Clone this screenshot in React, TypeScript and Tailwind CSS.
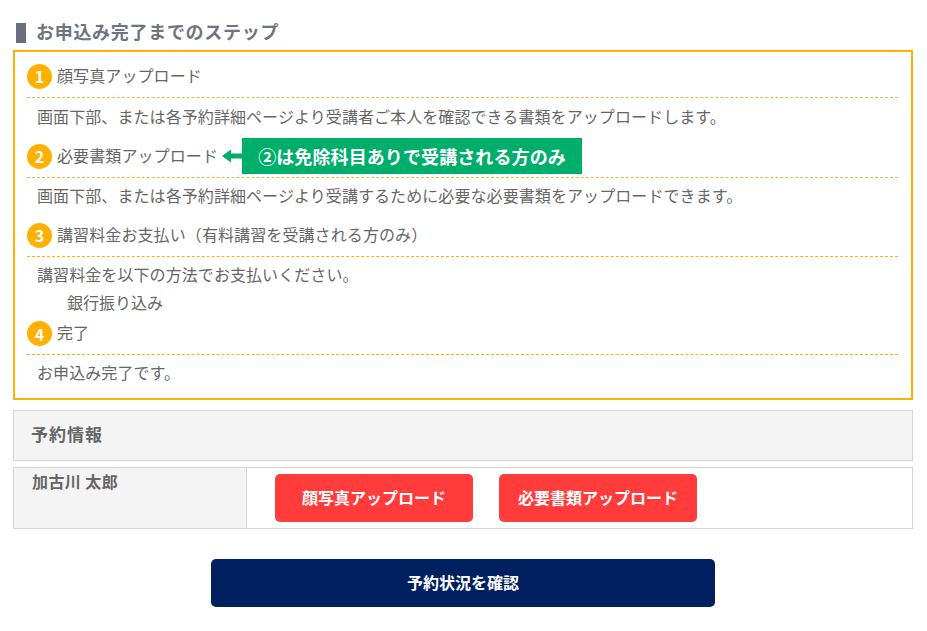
const font = { fontFamily: '"Noto Sans CJK JP", sans-serif' };

function Step({ n, title, children, dashed = "border-[#f5b335]", height = "h-[43px]", shift = "pb-[2px]" }: { n: number; title: string; children?: React.ReactNode; dashed?: string; height?: string; shift?: string }) {
  return (
    <div className={`flex ${height} items-center border-b border-dashed ${dashed}`}>
      <span className="flex h-[25px] w-[25px] shrink-0 items-center justify-center rounded-full bg-[#ffb000] text-[16px] font-bold leading-none text-white">{n}</span>
      <span className={`ml-[5px] ${shift} text-[16px] leading-none tracking-[0.1px]`}>{title}</span>
      {children}
    </div>
  );
}

function Desc({ children, height = "h-[36px]" }: { children: React.ReactNode; height?: string }) {
  return <p className={`flex ${height} items-center pb-[2px] pl-[10px] text-[16px] leading-none tracking-[0.08px]`}>{children}</p>;
}

export default function App() {
  return (
    <div className="min-h-[631px] w-[927px] bg-white pl-[13px] pr-[14px] text-[#666666]" style={font}>
      <h2 className="flex h-[50px] items-end pb-[7px] pl-[3px] text-[18px] font-bold leading-[20px] text-[#6d7680]">
        <span className="mr-[10px] h-[20px] w-[10px] bg-[#666f7b]" />
        <span className="mb-[2px] tracking-[0.7px]">お申込み完了までのステップ</span>
      </h2>
      <div className="h-[350px] border-2 border-[#ffb000] pl-[12px] pr-[13px] pt-[3px]">
        <Step n={1} title="顔写真アップロード" />
        <Desc height="h-[37px]">画面下部、または各予約詳細ページより受講者ご本人を確認できる書類をアップロードします。</Desc>
        <Step n={2} title="必要書類アップロード">
          <svg className="ml-[4px] shrink-0" width="20" height="14" viewBox="0 0 20 14">
            <path d="M0 7 L9 0.5 V4.5 H20 V9.5 H9 V13.5 Z" fill="#00ae6b" />
          </svg>
          <span className="flex h-[36px] w-[340px] items-center justify-center bg-[#00ae6b] pb-[1px] text-[18px] font-bold leading-none tracking-[0.1px] text-white">②は免除科目ありで受講される方のみ</span>
        </Step>
        <Desc>画面下部、または各予約詳細ページより受講するために必要な必要書類をアップロードできます。</Desc>
        <Step n={3} title="講習料金お支払い（有料講習を受講される方のみ）" dashed="border-[#ffb000]" />
        <Desc>講習料金を以下の方法でお支払いください。</Desc>
        <p className="flex h-[20px] items-center pb-[2px] pl-[40px] text-[16px] leading-none">銀行振り込み</p>
        <Step n={4} title="完了" dashed="border-[#ffb000]" height="h-[42px]" shift="pb-[4px]" />
        <Desc>お申込み完了です。</Desc>
      </div>
      <div className="mt-[10px] flex h-[51px] items-center border border-[#d4d4d4] bg-[#f4f4f4] pb-[3px] pl-[17px] text-[17px] font-bold tracking-[1px]">予約情報</div>
      <div className="mt-[6px] flex h-[62px] border border-[#d4d4d4]">
        <div className="w-[233px] border-r border-[#d4d4d4] bg-[#f4f4f5] pl-[18px] pt-[2px] text-[16px] font-bold leading-[22px] tracking-[0.4px]">加古川 太郎</div>
        <div className="flex items-start gap-[26px] pl-[28px] pt-[6px]">
          <button className="flex h-[48px] w-[198px] items-center justify-center rounded-[5px] bg-[#ff3b3b] pb-[3px] text-[16px] font-bold text-white">顔写真アップロード</button>
          <button className="flex h-[48px] w-[198px] items-center justify-center rounded-[5px] bg-[#ff3b3b] pb-[3px] text-[16px] font-bold text-white">必要書類アップロード</button>
        </div>
      </div>
      <div className="mt-[30px] flex justify-center">
        <button className="flex h-[48px] w-[504px] items-center justify-center rounded-[5px] bg-[#002060] pb-[2px] text-[16px] font-bold text-white">予約状況を確認</button>
      </div>
    </div>
  );
}
